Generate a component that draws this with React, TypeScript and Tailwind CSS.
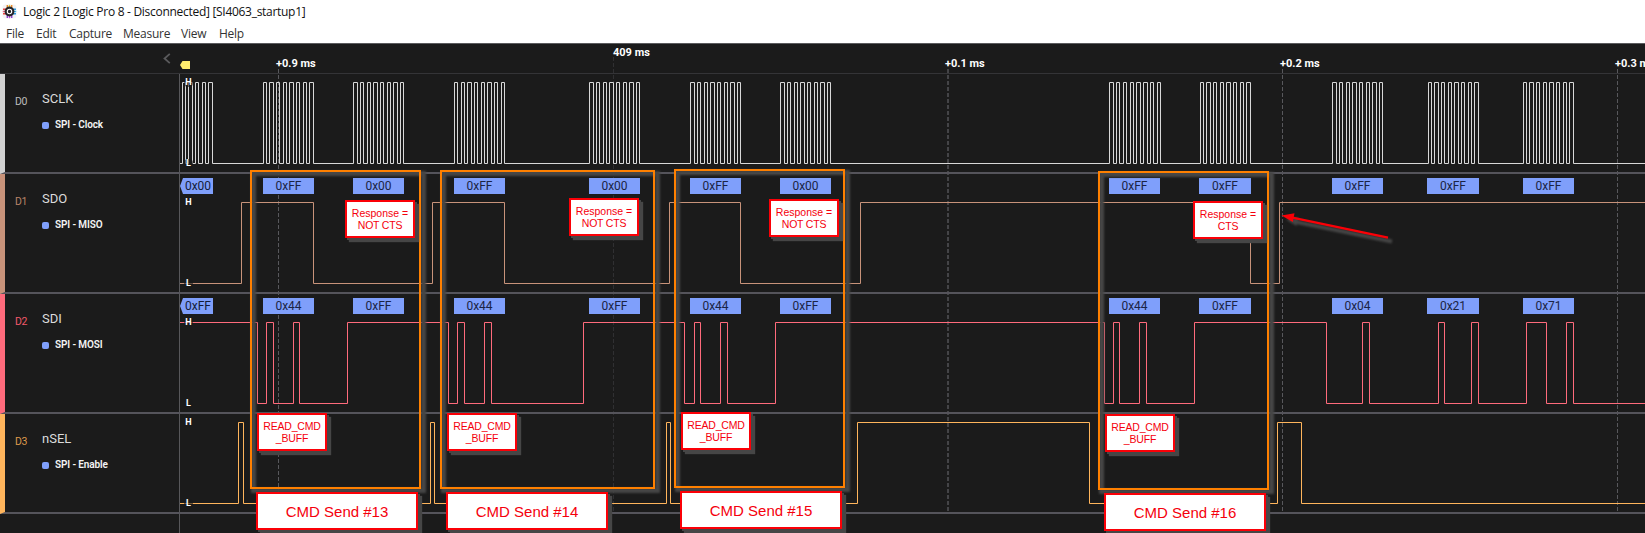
import React from "react";

type Edge = number;

const PLOT_X = 180;
const PLOT_W = 1465;

/** Square wave as an SVG path; coordinates are relative to the plot's left edge. */
function wavePath(edges: Edge[], startHigh: boolean, high: number, low: number) {
  let level = startHigh;
  let d = `M0 ${level ? high : low}`;
  for (const e of edges) {
    d += `H${e - PLOT_X + 0.5}`;
    level = !level;
    d += `V${level ? high : low}`;
  }
  return d + `H${PLOT_W}`;
}

const bursts: [number, number, number][] = [
  [162, 0, 50],
  [263, 0, 50],
  [353, 2 / 3, 50],
  [454, 1 / 3, 50],
  [589, 2 / 3, 50],
  [690, 2 / 3, 50],
  [780, 2 / 3, 50],
  [1109, 2 / 3, 51],
  [1200, 0, 50],
  [1332, 2 / 3, 50],
  [1428, 0, 50],
  [1523, 0, 50],
];

const clockEdges = bursts
  .flatMap(([start, phase, span]) =>
    Array.from({ length: 16 }, (_, i) => Math.floor(start + phase + (i * span) / 15 + 0.001)),
  )
  .filter((x) => x > PLOT_X);

const sdoEdges = [241, 313, 432, 504, 669, 740, 860, 1250, 1279];
const sdiEdges = [
  257, 266, 273, 293, 299, 347, 448, 457, 464, 484, 491, 583, 684, 694, 700, 720, 727, 775, 1104, 1113, 1119, 1139,
  1146, 1194, 1326, 1362, 1369, 1438, 1444, 1471, 1478, 1526, 1546, 1566, 1573,
];
const selEdges = [238, 243, 430, 434, 666, 670, 857, 1089, 1277, 1301];

type Frame = { x: number; w: number; label: string };
const slots: [number, number][] = [
  [263, 51],
  [353, 51],
  [454, 51],
  [589, 51],
  [690, 51],
  [780, 51],
  [1109, 51],
  [1199, 52],
  [1332, 51],
  [1427, 52],
  [1523, 51],
];
const frames = (labels: string[]): Frame[] => labels.map((label, i) => ({ x: slots[i][0], w: slots[i][1], label }));

type Channel = {
  id: string;
  name: string;
  analyzer: string;
  color: string;
  strip: string;
  idColor: string;
  height: string;
  high: number;
  edges: Edge[];
  startHigh: boolean;
  first?: string;
  frames: Frame[];
};

const channels: Channel[] = [
  {
    id: "D0",
    name: "SCLK",
    analyzer: "SPI - Clock",
    color: "#d8d8d8",
    strip: "border-l-[#d2d2d2]",
    idColor: "text-[#bdbdbd]",
    height: "h-[100px]",
    high: 8.5,
    edges: clockEdges,
    startHigh: false,
    frames: [],
  },
  {
    id: "D1",
    name: "SDO",
    analyzer: "SPI - MISO",
    color: "#c8937a",
    strip: "border-l-[#c8937a]",
    idColor: "text-[#b98468]",
    height: "h-[120px]",
    high: 28.5,
    edges: sdoEdges,
    startHigh: false,
    first: "0x00",
    frames: frames(["0xFF", "0x00", "0xFF", "0x00", "0xFF", "0x00", "0xFF", "0xFF", "0xFF", "0xFF", "0xFF"]),
  },
  {
    id: "D2",
    name: "SDI",
    analyzer: "SPI - MOSI",
    color: "#ff6b7c",
    strip: "border-l-[#ff6b7c]",
    idColor: "text-[#f0596a]",
    height: "h-[120px]",
    high: 28.5,
    edges: sdiEdges,
    startHigh: true,
    first: "0xFF",
    frames: frames(["0x44", "0xFF", "0x44", "0xFF", "0x44", "0xFF", "0x44", "0xFF", "0x04", "0x21", "0x71"]),
  },
  {
    id: "D3",
    name: "nSEL",
    analyzer: "SPI - Enable",
    color: "#ffb55c",
    strip: "border-l-[#ffb55c]",
    idColor: "text-[#dd9a4c]",
    height: "h-[100px]",
    high: 8.5,
    edges: selEdges,
    startHigh: false,
    frames: [],
  },
];

function AppIcon() {
  return (
    <svg width="15" height="15" viewBox="0 0 15 15" className="block">
      <rect x="0.5" y="0.5" width="14" height="14" rx="3" fill="#f3f3f5" />
      <path d="M5.3 1v3M9.7 1v3" stroke="#f08a24" strokeWidth="1.4" />
      <path d="M7.5 0.8v3" stroke="#e8c52a" strokeWidth="1.4" />
      <path d="M5.3 11v3M9.7 11v3" stroke="#8a3fd1" strokeWidth="1.4" />
      <path d="M7.5 11v3.2" stroke="#c04bd8" strokeWidth="1.4" />
      <path d="M1 5.3h3M1 9.7h3" stroke="#e8433f" strokeWidth="1.4" />
      <path d="M0.8 7.5h3" stroke="#f0607a" strokeWidth="1.4" />
      <path d="M11 5.3h3M11 9.7h3" stroke="#2f9be0" strokeWidth="1.4" />
      <path d="M11 7.5h3.2" stroke="#35b7e8" strokeWidth="1.4" />
      <circle cx="7.5" cy="7.5" r="4.9" fill="#26262a" />
      <circle cx="7.5" cy="7.5" r="2.2" fill="none" stroke="#fff" strokeWidth="1.1" />
    </svg>
  );
}

function LevelMark({ text, y }: { text: string; y: number }) {
  return (
    <span
      className="absolute left-[4px] flex h-[9px] w-[9px] items-center justify-center rounded-sm bg-[#1b1b1b]/60 text-[9px] leading-[9px] font-bold text-white"
      style={{ top: y - 4.5 }}
    >
      {text}
    </span>
  );
}

function ChannelRow({ c }: { c: Channel }) {
  const low = c.high + 81;
  return (
    <div className={`flex shrink-0 border-b-2 border-l-5 border-b-[#55545b] ${c.strip} ${c.height}`}>
      <div className="flex w-[174px] shrink-0">
        <span className={`w-[37px] pt-[21px] pl-[10px] text-[10.5px] leading-[13px] tracking-[-0.3px] ${c.idColor}`}>
          {c.id}
        </span>
        <div className="flex flex-col pt-[17px]">
          <span className="text-[13px] leading-4 text-[#dcdcdc]">{c.name}</span>
          <span className="mt-[11px] flex items-center text-[10px] leading-[14px] font-semibold tracking-[-0.12px] whitespace-nowrap text-[#f4f4f4]">
            <i className="mr-[6px] h-[7px] w-[7px] rounded-[2px] bg-[#7f9ffb]" />
            {c.analyzer}
          </span>
        </div>
      </div>
      <div className="w-px shrink-0 bg-[#57575a]" />
      <div className="relative min-w-0 flex-1 overflow-hidden">
        <svg width={PLOT_W} height={c.high + 90} className="block">
          <path d={wavePath(c.edges, c.startHigh, c.high, low)} fill="none" stroke={c.color} strokeWidth="1" />
        </svg>
        {c.first && (
          <span className="absolute top-[4px] left-0 flex h-4 w-[33px] items-center justify-center bg-[#7f9ffb] pl-[3px] text-[12px] leading-4 text-[#141c38] [clip-path:polygon(3px_0,100%_0,100%_100%,3px_100%,0_50%)]">
            {c.first}
          </span>
        )}
        {c.frames.map((f) => (
          <span
            key={f.x}
            className="absolute top-[4px] flex h-4 items-center justify-center bg-[#7f9ffb] text-[12px] leading-4 text-[#1b2444]"
            style={{ left: f.x - PLOT_X, width: f.w }}
          >
            {f.label}
          </span>
        ))}
        <LevelMark text="H" y={c.high} />
        <LevelMark text="L" y={low} />
      </div>
    </div>
  );
}

const ticks = [
  { line: 278.5, text: 276, label: "+0.9 ms", color: "#58585c", w: 1, major: false },
  { line: 613.5, text: 613, label: "409 ms", color: "#303032", w: 1, major: true },
  { line: 948, text: 945, label: "+0.1 ms", color: "#444447", w: 2, major: false },
  { line: 1282.5, text: 1280, label: "+0.2 ms", color: "#58585c", w: 1, major: false },
  { line: 1617.5, text: 1615, label: "+0.3 ms", color: "#58585c", w: 1, major: false },
];

const groups = [
  { x: 250, y: 170, w: 171 },
  { x: 440, y: 170, w: 215 },
  { x: 674, y: 169, w: 171 },
  { x: 1098, y: 171, w: 171 },
];

const titles = [
  { x: 256, y: 492, text: "CMD Send #13" },
  { x: 446, y: 492, text: "CMD Send #14" },
  { x: 680, y: 491, text: "CMD Send #15" },
  { x: 1104, y: 493, text: "CMD Send #16" },
];

const reads = [
  { x: 257, y: 413 },
  { x: 447, y: 413 },
  { x: 681, y: 412 },
  { x: 1105, y: 414 },
];

const responses = [
  { x: 345, y: 200, text: "NOT CTS" },
  { x: 569, y: 198, text: "NOT CTS" },
  { x: 769, y: 199, text: "NOT CTS" },
  { x: 1193, y: 201, text: "CTS" },
];

const noteBox =
  "absolute border-2 border-[#fb0007] bg-white text-center text-[#f5000c] shadow-[2px_2px_0_#464646,4px_4px_1px_#464646] font-['Liberation_Sans',Arial,sans-serif]";

function Annotations() {
  return (
    <div className="pointer-events-none absolute inset-0 overflow-hidden">
      {groups.map((g) => (
        <React.Fragment key={g.x}>
          <div
            className="absolute h-[322px] border-[5px] border-[#464646] blur-[1px]"
            style={{ left: g.x + 1, top: g.y + 1, width: g.w + 4 }}
          />
          <div
            className="absolute h-[319px] border-2 border-[#ff8000]"
            style={{ left: g.x, top: g.y, width: g.w }}
          />
        </React.Fragment>
      ))}
      {responses.map((r) => (
        <div
          key={r.x}
          className={`${noteBox} h-[38px] w-[70px] pt-[5px] text-[10.5px] leading-[12px] whitespace-nowrap`}
          style={{ left: r.x, top: r.y }}
        >
          Response =<br />
          <span className="tracking-[-0.2px]">{r.text}</span>
        </div>
      ))}
      {reads.map((r) => (
        <div
          key={r.x}
          className={`${noteBox} h-[38px] w-[70px] pt-[5px] text-[10.5px] leading-[12px] tracking-[-0.2px]`}
          style={{ left: r.x, top: r.y }}
        >
          READ_CMD
          <br />
          _BUFF
        </div>
      ))}
      {titles.map((t) => (
        <div
          key={t.x}
          className={`${noteBox} h-[38px] w-[162px] pt-px text-[15px] leading-[34px]`}
          style={{ left: t.x, top: t.y }}
        >
          {t.text}
        </div>
      ))}
      <svg className="absolute top-[205px] left-[1275px]" width="125" height="45" viewBox="1275 205 125 45">
        <g transform="translate(4 4)" opacity="0.9" className="blur-[0.8px]">
          <path d="M1290 217.5L1388 237.5" stroke="#4a4a4a" strokeWidth="4" />
          <path d="M1282 215.5L1294.5 213.5L1292.5 222Z" fill="#4a4a4a" />
        </g>
        <path d="M1290 217.2L1388 237.7" stroke="#fb0007" strokeWidth="2.4" />
        <path d="M1281.5 215.5L1294.5 213.3L1292.8 222Z" fill="#fb0007" />
      </svg>
    </div>
  );
}

export default function App() {
  return (
    <div className="relative flex h-[533px] w-[1645px] flex-col overflow-hidden bg-[#1b1b1b] font-['Roboto',sans-serif]">
      <header className="h-[43px] shrink-0 bg-white font-['Open_Sans','Noto_Sans',sans-serif] text-[12px] text-[#111]">
        <div className="flex h-[23px] items-center gap-[6px] pl-[2px]">
          <AppIcon />
          <span className="text-[12px] leading-[22px] tracking-[-0.29px] whitespace-pre">
            Logic 2 [Logic Pro 8 - Disconnected] [SI4063_startup1]
          </span>
        </div>
        <nav className="flex h-[20px] items-center gap-[12px] pl-[6px] text-[12px] leading-[19px] tracking-[-0.25px] text-[#333]">
          <span className="w-[18px]">File</span>
          <span className="w-[21px]">Edit</span>
          <span className="w-[42px]">Capture</span>
          <span className="w-[46px]">Measure</span>
          <span className="w-[26px]">View</span>
          <span>Help</span>
        </nav>
      </header>

      <div className="relative flex h-[31px] shrink-0 border-t border-b border-t-[#5b5b5e] border-b-[#343437]">
        <div className="flex w-[180px] justify-end pt-[9px] pr-[9px]">
          <svg width="8" height="11" viewBox="0 0 8 11">
            <path d="M6.8 0.8L1.5 5.5L6.8 10.2" fill="none" stroke="#5a5a5c" strokeWidth="1.8" />
          </svg>
        </div>
        <svg className="mt-[17px]" width="10" height="8" viewBox="0 0 10 8">
          <path d="M2.5 0H10V8H2.5L0 4Z" fill="#ffec6e" />
        </svg>
        {ticks.map((t) => (
          <span
            key={t.label}
            className={`absolute text-[11px] leading-[14px] font-bold whitespace-nowrap text-white ${t.major ? "top-[2px]" : "top-[13px]"}`}
            style={{ left: t.text }}
          >
            {t.label}
          </span>
        ))}
      </div>

      <svg className="pointer-events-none absolute top-0 left-0" width="1645" height="533">
        {ticks.map((t) => (
          <path
            key={t.label}
            d={`M${t.line} ${t.major ? 57 : 69}V512`}
            stroke={t.color}
            strokeWidth={t.w}
            strokeDasharray="4 2"
          />
        ))}
      </svg>

      <main className="relative flex flex-1 flex-col">
        {channels.map((c) => (
          <ChannelRow key={c.id} c={c} />
        ))}
        <div className="ml-[179px] w-px flex-1 bg-[#57575a]" />
      </main>

      <Annotations />
    </div>
  );
}
